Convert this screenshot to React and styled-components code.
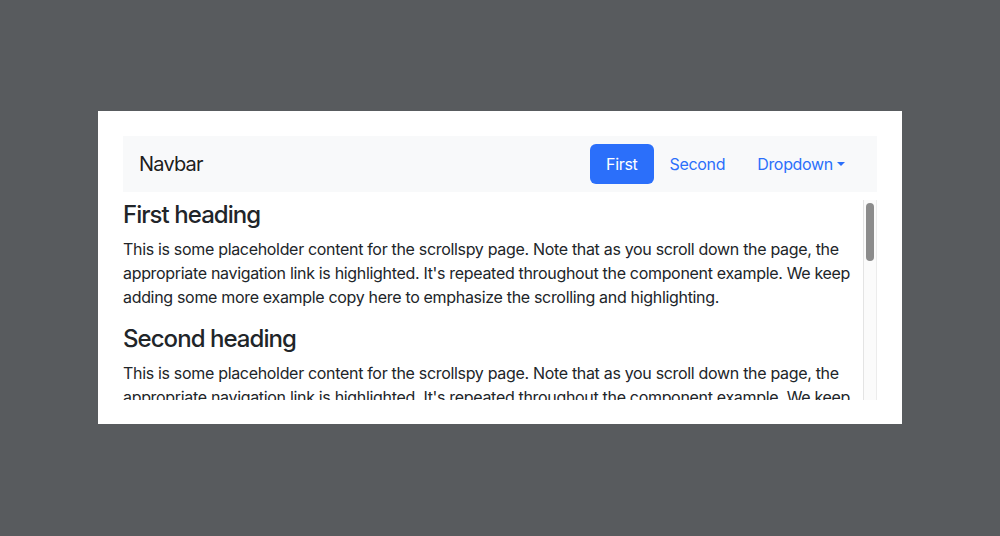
import React from "react";
import styled, { createGlobalStyle } from "styled-components";

const GlobalStyle = createGlobalStyle`
  * { box-sizing: border-box; }
  html, body { margin: 0; padding: 0; }
  body {
    background: #585b5e;
    font-family: Inter, "Liberation Sans", Arial, sans-serif;
    font-size: 16px;
    line-height: 1.5;
    letter-spacing: -0.32px;
    color: #212529;
  }
`;

const Page = styled.div`
  height: 536px;
  padding-top: 111px;
  display: flex;
  justify-content: center;
  align-items: flex-start;
`;

const Card = styled.div`
  width: 804px;
  background: #fff;
  padding: 25px 25px 24px;
`;

const Navbar = styled.nav`
  display: flex;
  align-items: center;
  justify-content: space-between;
  background: #f8f9fa;
  padding: 8px 16px;
  margin-bottom: 8px;
`;

const Brand = styled.a`
  font-size: 20px;
  line-height: 30px;
  letter-spacing: -0.8px;
  color: rgba(0, 0, 0, 0.9);
  text-decoration: none;
`;

const Pills = styled.ul`
  display: flex;
  list-style: none;
  margin: 0;
  padding: 0;
`;

const PillLink = styled.a`
  display: block;
  padding: 8px 16px;
  line-height: 24px;
  border-radius: 6px;
  text-decoration: none;
  color: ${(p) => (p.$active ? "#fff" : "#2b6ffa")};
  background: ${(p) => (p.$active ? "#2b6ffa" : "transparent")};
`;

const Caret = styled.span`
  display: inline-block;
  margin-left: 4px;
  vertical-align: 4px;
  border-top: 4.5px solid currentColor;
  border-left: 4px solid transparent;
  border-right: 4px solid transparent;
`;

const SpyFrame = styled.div`
  display: flex;
  height: 200px;
`;

const Spy = styled.div`
  flex: 1;
  overflow-y: auto;
  scrollbar-width: none;
  padding-right: 8px;

  &::-webkit-scrollbar {
    display: none;
  }
`;

const Track = styled.div`
  width: 14px;
  flex-shrink: 0;
  background: #fbfbfb;
  border-left: 1px solid #e4e4e4;
  border-right: 1px solid #ececec;
  padding: 3px 2px 0;
`;

const Thumb = styled.div`
  width: 8px;
  height: 58px;
  margin: 0 auto;
  border-radius: 4px;
  background: #8c8c8c;
`;

const Heading = styled.h4`
  margin: 1px 0 7px;
  font-size: 24px;
  font-weight: 500;
  line-height: 1.2;
  letter-spacing: -0.95px;
`;

const Text = styled.p`
  margin: 0 0 16px;
`;

const copy =
  "This is some placeholder content for the scrollspy page. Note that as you scroll down the page, the appropriate navigation link is highlighted. It's repeated throughout the component example. We keep adding some more example copy here to emphasize the scrolling and highlighting.";

const sections = ["First", "Second", "Third", "Fourth", "Fifth"];

export default function App() {
  return (
    <>
      <GlobalStyle />
      <Page>
        <Card>
          <Navbar>
            <Brand href="#">Navbar</Brand>
            <Pills>
              <li>
                <PillLink href="#first" $active>
                  First
                </PillLink>
              </li>
              <li>
                <PillLink href="#second">Second</PillLink>
              </li>
              <li>
                <PillLink href="#dropdown">
                  Dropdown
                  <Caret />
                </PillLink>
              </li>
            </Pills>
          </Navbar>
          <SpyFrame>
            <Spy>
              {sections.map((s) => (
                <section key={s}>
                  <Heading>{s} heading</Heading>
                  <Text>{copy}</Text>
                </section>
              ))}
            </Spy>
            <Track>
              <Thumb />
            </Track>
          </SpyFrame>
        </Card>
      </Page>
    </>
  );
}
